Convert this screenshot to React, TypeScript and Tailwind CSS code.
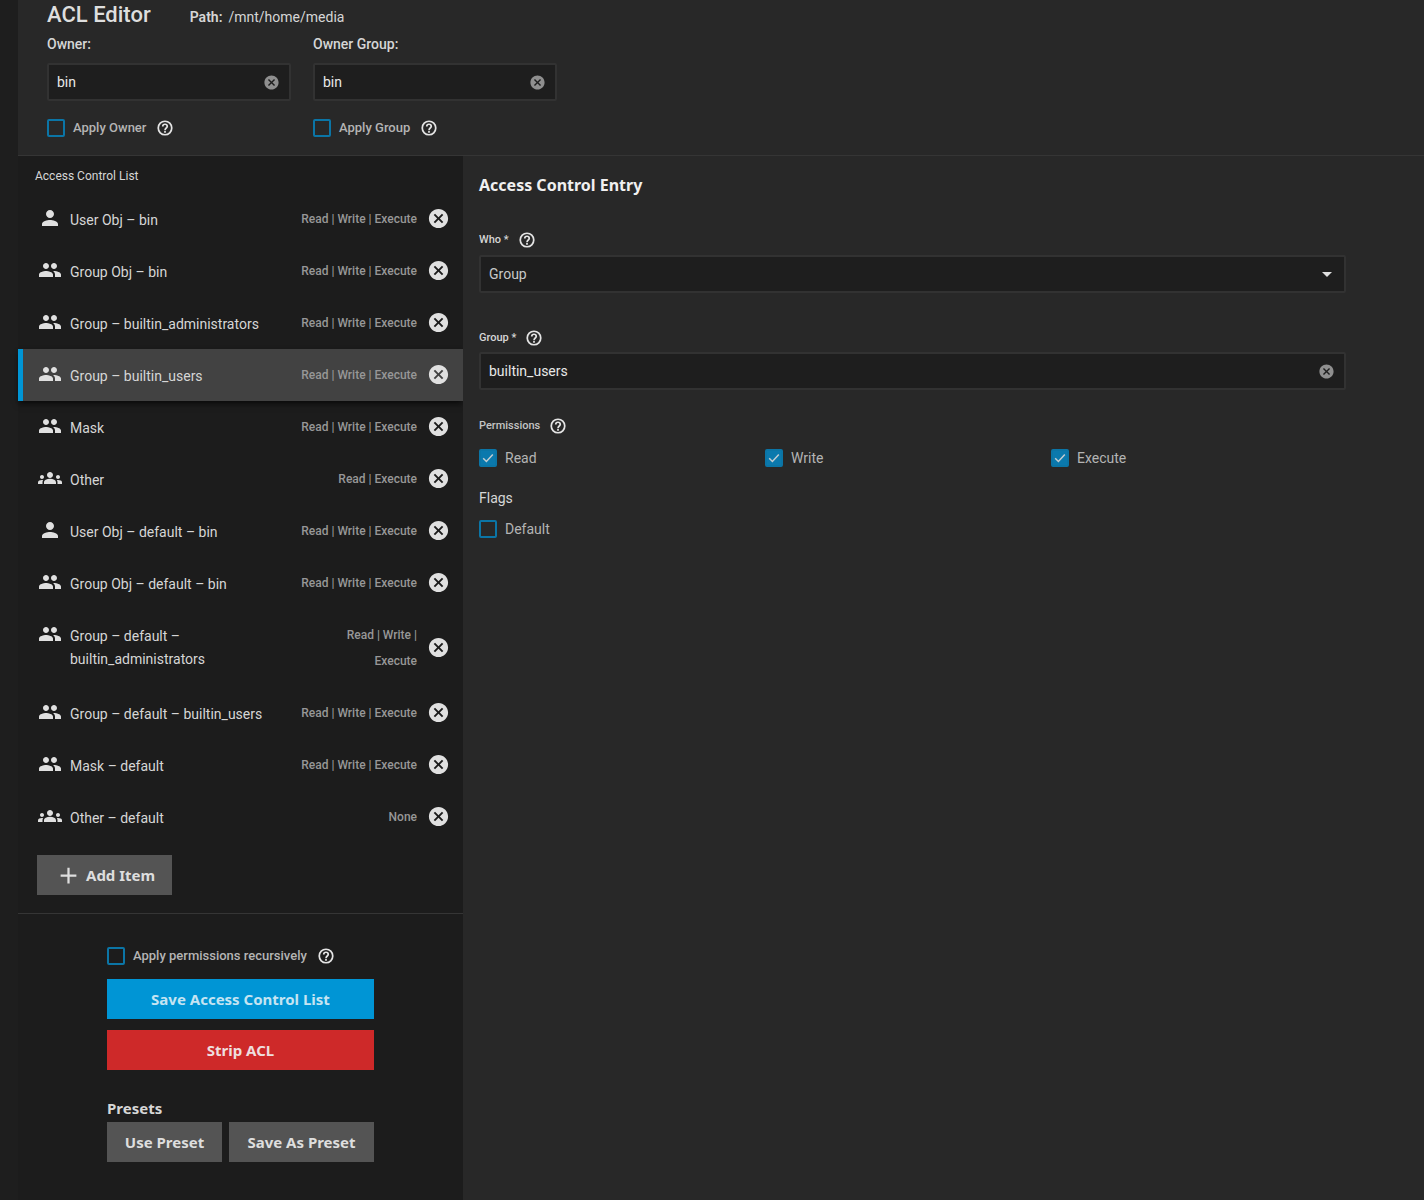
import React, { useState } from 'react';
import {
  MdAdd,
  MdArrowDropDown,
  MdCancel,
  MdGroups,
  MdPeople,
  MdPerson,
} from 'react-icons/md';

interface AclItem {
  id: number;
  kind: 'user' | 'group' | 'other';
  name: string;
  permissions: string;
}

const initialItems: AclItem[] = [
  { id: 1, kind: 'user', name: 'User Obj – bin', permissions: 'Read | Write | Execute' },
  { id: 2, kind: 'group', name: 'Group Obj – bin', permissions: 'Read | Write | Execute' },
  { id: 3, kind: 'group', name: 'Group – builtin_administrators', permissions: 'Read | Write | Execute' },
  { id: 4, kind: 'group', name: 'Group – builtin_users', permissions: 'Read | Write | Execute' },
  { id: 5, kind: 'group', name: 'Mask', permissions: 'Read | Write | Execute' },
  { id: 6, kind: 'other', name: 'Other', permissions: 'Read | Execute' },
  { id: 7, kind: 'user', name: 'User Obj – default – bin', permissions: 'Read | Write | Execute' },
  { id: 8, kind: 'group', name: 'Group Obj – default – bin', permissions: 'Read | Write | Execute' },
  { id: 9, kind: 'group', name: 'Group – default – builtin_administrators', permissions: 'Read | Write | Execute' },
  { id: 10, kind: 'group', name: 'Group – default – builtin_users', permissions: 'Read | Write | Execute' },
  { id: 11, kind: 'group', name: 'Mask – default', permissions: 'Read | Write | Execute' },
  { id: 12, kind: 'other', name: 'Other – default', permissions: 'None' },
];

const kindIcons = {
  user: MdPerson,
  group: MdPeople,
  other: MdGroups,
};

const headingFont = "font-['Noto_Sans',sans-serif] font-bold";
const fieldLabelClasses = 'text-[11px] leading-[18px] font-medium';
const boxClasses = 'flex h-[38px] items-center rounded-xs border-2 border-[#323232] bg-[#1e1e1e]';
const buttonClasses = `${headingFont} h-10 text-[15px] leading-5`;
const greyButtonClasses = `${buttonClasses} bg-[#545454] text-[#dedede]`;

function HelpButton() {
  return (
    <button type="button" aria-label="Help" className="text-[#e4e4e4]">
      <svg viewBox="0 0 24 24" className="size-[18px]" fill="none" stroke="currentColor" strokeWidth="2.3">
        <circle cx="12" cy="12" r="9" />
        <path d="M9 10c0-1.7 1.3-3 3-3s3 1.3 3 3c0 2-3 2.2-3 5" />
        <path d="M12 16v2.2" />
      </svg>
    </button>
  );
}

interface CheckProps {
  id: string;
  label: string;
  defaultChecked?: boolean;
}

function Check({ id, label, defaultChecked }: CheckProps) {
  return (
    <div className="flex items-center gap-2">
      <span className="relative flex">
        <input
          id={id}
          type="checkbox"
          defaultChecked={defaultChecked}
          className="peer size-[18px] appearance-none rounded-xs border-2 border-[#0b75a6] checked:bg-[#0b79ad]"
        />
        <svg
          viewBox="0 0 18 18"
          className="pointer-events-none absolute inset-0 hidden size-[18px] peer-checked:block"
          fill="none"
          stroke="#c3cdd2"
          strokeWidth="1.5"
        >
          <path d="M4.2 9.3 L7.4 12.5 L13.8 5.6" />
        </svg>
      </span>
      <label htmlFor={id} className="text-[#b4b4b4]">{label}</label>
    </div>
  );
}

interface ClearableInputProps {
  id: string;
  initial: string;
}

function ClearableInput({ id, initial }: ClearableInputProps) {
  const [value, setValue] = useState(initial);

  return (
    <div className={boxClasses}>
      <input
        id={id}
        type="text"
        value={value}
        onChange={(e) => setValue(e.target.value)}
        className="min-w-0 flex-1 bg-transparent px-2 text-[#e8e8e8] outline-none"
      />
      <button type="button" aria-label="Clear" onClick={() => setValue('')} className="mr-[9px] text-[#8f8f8f]">
        <MdCancel size={17} />
      </button>
    </div>
  );
}

export default function App() {
  const [items, setItems] = useState<AclItem[]>(initialItems);
  const [selectedId, setSelectedId] = useState(4);

  const removeItem = (id: number) => {
    setItems(prev => prev.filter(item => item.id !== id));
  };

  return (
    <div className="flex min-h-screen flex-col bg-[#1e1e1e] pl-[18px] font-[Roboto,sans-serif] text-sm text-[#d6d6d6]">
      <header className="border-b border-[#353535] bg-[#282828] px-[29px] pb-[17px]">
        <div className="flex items-center gap-[39px] pt-px">
          <h1 className="text-[22px] leading-7 font-medium text-[#dedede]">ACL Editor</h1>
          <p className="pt-1 leading-5">
            <strong className="mr-[6px] font-semibold">Path:</strong>/mnt/home/media
          </p>
        </div>
        <div className="flex gap-[22px] pt-[5px]">
          <div className="w-[244px]">
            <label htmlFor="owner" className="block leading-5 font-medium">Owner:</label>
            <div className="pt-[9px] pb-[17px]">
              <ClearableInput id="owner" initial="bin" />
            </div>
            <div className="flex items-center gap-[10px] text-[13px] leading-5 font-medium">
              <Check id="apply-owner" label="Apply Owner" />
              <HelpButton />
            </div>
          </div>
          <div className="w-[244px]">
            <label htmlFor="owner-group" className="block leading-5 font-medium">Owner Group:</label>
            <div className="pt-[9px] pb-[17px]">
              <ClearableInput id="owner-group" initial="bin" />
            </div>
            <div className="flex items-center gap-[10px] text-[13px] leading-5 font-medium">
              <Check id="apply-group" label="Apply Group" />
              <HelpButton />
            </div>
          </div>
        </div>
      </header>

      <div className="flex flex-1">
        <aside className="w-[445px] shrink-0 bg-[#1c1c1c]">
          <h2 className="px-[17px] pt-[10px] pb-[7px] text-xs leading-5">Access Control List</h2>
          <ul>
            {items.map(item => {
              const Icon = kindIcons[item.kind];
              const selected = item.id === selectedId;
              return (
                <li
                  key={item.id}
                  onClick={() => setSelectedId(item.id)}
                  className={`flex items-center gap-[10px] border-l-[5px] py-[13px] pr-[13px] pl-[15px] ${
                    selected ? 'border-[#0095d5] bg-[#424242] shadow-md shadow-black/50' : 'border-transparent'
                  }`}
                >
                  <div className="flex flex-1 items-start">
                    <Icon size={24} className="mr-2 shrink-0 text-[#e0e0e0]" />
                    <span className="mr-auto pt-[3px] leading-[23px]">{item.name}</span>
                    <span className="pl-2 text-right text-xs leading-[26px] font-medium text-[#979797]">{item.permissions}</span>
                  </div>
                  <button
                    type="button"
                    aria-label={`Remove ${item.name}`}
                    onClick={() => removeItem(item.id)}
                    className="pb-[2px] text-[#e0e0e0]"
                  >
                    <MdCancel size={23} />
                  </button>
                </li>
              );
            })}
          </ul>
          <div className="border-b border-[#353535] px-[19px] pt-3 pb-[18px]">
            <button type="button" className={`${greyButtonClasses} flex items-center gap-1 pr-[17px] pl-[18px]`}>
              <MdAdd size={27} />
              Add Item
            </button>
          </div>

          <div className="mx-auto w-[267px] pt-8">
            <div className="flex items-center gap-[10px] pb-[13px] text-[13px] leading-5 font-medium">
              <Check id="recursive" label="Apply permissions recursively" />
              <HelpButton />
            </div>
            <button type="button" className={`${buttonClasses} w-full bg-[#0095d5] text-[#c5e4f2]`}>
              Save Access Control List
            </button>
            <button type="button" className={`${buttonClasses} mt-[11px] w-full bg-[#ce2929] text-[#eedede]`}>
              Strip ACL
            </button>
            <h3 className={`${headingFont} pt-7 pb-1 text-[15px] leading-5`}>Presets</h3>
            <div className="flex gap-[7px]">
              <button type="button" className={`${greyButtonClasses} w-[115px]`}>Use Preset</button>
              <button type="button" className={`${greyButtonClasses} flex-1`}>Save As Preset</button>
            </div>
          </div>
        </aside>

        <main className="flex-1 bg-[#282828] pt-[17px] pr-[78px] pl-4">
          <h2 className={`${headingFont} text-base leading-6 text-[#f0f0f0]`}>Access Control Entry</h2>

          <div className="flex items-center gap-[9px] pt-[34px] pb-[6px]">
            <label htmlFor="who" className={fieldLabelClasses}>Who *</label>
            <HelpButton />
          </div>
          <div className={`${boxClasses} relative`}>
            <select id="who" defaultValue="Group" className="size-full appearance-none px-2 text-[#c8c8c8] outline-none">
              <option>User Obj</option>
              <option>Group Obj</option>
              <option>User</option>
              <option>Group</option>
              <option>Mask</option>
              <option>Other</option>
            </select>
            <MdArrowDropDown size={24} className="pointer-events-none absolute right-[5px] text-[#e0e0e0]" />
          </div>

          <div className="flex items-center gap-[9px] pt-9 pb-[5px]">
            <label htmlFor="group" className={fieldLabelClasses}>Group *</label>
            <HelpButton />
          </div>
          <ClearableInput id="group" initial="builtin_users" />

          <fieldset>
            <legend className={`${fieldLabelClasses} flex items-center gap-[9px] pt-[27px] text-[#c4c4c4]`}>
              Permissions
              <HelpButton />
            </legend>
            <div className="grid grid-cols-3 pt-[13px] pr-[9px]">
              <Check id="read" label="Read" defaultChecked />
              <Check id="write" label="Write" defaultChecked />
              <Check id="execute" label="Execute" defaultChecked />
            </div>
          </fieldset>

          <fieldset>
            <legend className="pt-5 leading-5">Flags</legend>
            <div className="pt-[11px]">
              <Check id="default" label="Default" />
            </div>
          </fieldset>
        </main>
      </div>
    </div>
  );
}
